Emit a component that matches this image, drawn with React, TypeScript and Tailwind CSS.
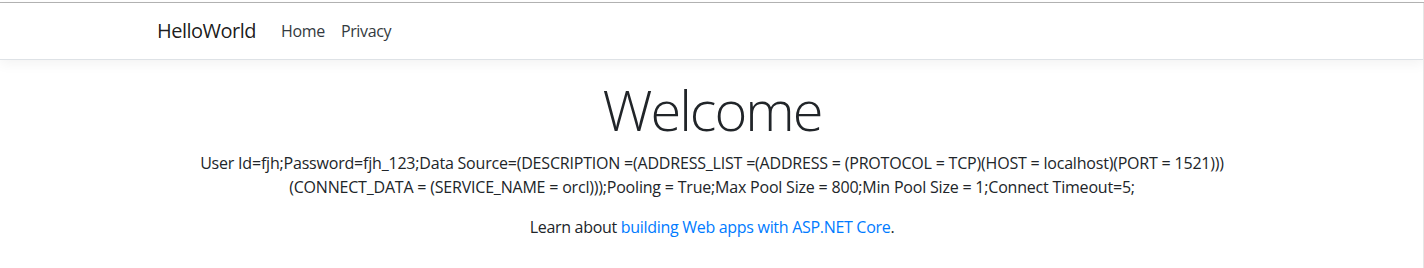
export default function App() {
  const font = { fontFamily: '"Open Sans", "Noto Sans", sans-serif' };
  return (
    <div className="relative min-h-[268px] bg-white text-[#212529]" style={font}>
      <div className="h-[2px] bg-white" />
      <div className="h-px bg-[#b4b4b4]" />
      <header className="mb-4 border-b border-[#dee2e6] bg-white shadow-[0_4px_12px_rgba(0,0,0,0.05)]">
        <nav className="mx-auto flex h-[56px] w-[1140px] items-center px-[15px]">
          <a className="mr-[17px] text-[20px] leading-[30px] tracking-[-0.5px] text-[rgba(0,0,0,0.9)]">HelloWorld</a>
          <a className="px-2 text-[16px] leading-6 tracking-[-0.35px] text-[#343a40]">Home</a>
          <a className="px-2 text-[16px] leading-6 tracking-[-0.35px] text-[#343a40]">Privacy</a>
        </nav>
      </header>
      <main className="mx-auto w-[1140px] px-[15px] text-center">
        <h1 className="mb-2 text-[56px] font-light leading-[1.2] tracking-[-2px]">Welcome</h1>
        <p className="mb-4 text-[16px] leading-6 tracking-[-0.2px]">
          User Id=fjh;Password=fjh_123;Data Source=(DESCRIPTION =(ADDRESS_LIST =(ADDRESS = (PROTOCOL = TCP)(HOST = localhost)(PORT = 1521)))
          <br />
          (CONNECT_DATA = (SERVICE_NAME = orcl)));Pooling = True;Max Pool Size = 800;Min Pool Size = 1;Connect Timeout=5;
        </p>
        <p className="text-[16px] leading-6 tracking-[-0.3px]">
          Learn about <a className="text-[#007bff]">building Web apps with ASP.NET Core</a>.
        </p>
      </main>
      <div className="absolute right-0 top-[3px] bottom-0 w-px bg-[#e6e6e6]" />
    </div>
  );
}
